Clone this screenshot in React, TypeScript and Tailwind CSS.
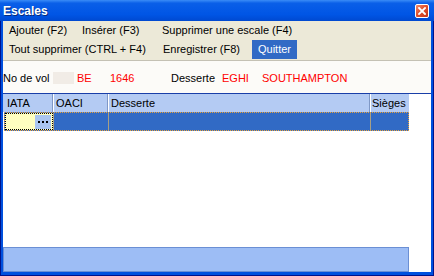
const font = "font-['Liberation_Sans','Arial',sans-serif]";

function CloseButton() {
  return (
    <div className="flex h-[14px] w-[14px] items-center justify-center rounded-[2px] border border-white bg-[linear-gradient(135deg,#F08A6C,#E2512D_45%,#C5361A)]">
      <svg width="8" height="8" viewBox="0 0 8 8">
        <path d="M1 1L7 7M7 1L1 7" stroke="white" strokeWidth="1.8" strokeLinecap="square" />
      </svg>
    </div>
  );
}

function MenuItem({ label, w, active }: { label: string; w: string; active?: boolean }) {
  return (
    <div
      className={`flex h-[19px] items-center pl-[6px] ${w} ${
        active ? "bg-[#316AC5] text-white" : "text-black"
      }`}
    >
      {label}
    </div>
  );
}

function Sep({ color }: { color: string }) {
  return <div className={`w-[1px] self-stretch ${color}`} />;
}

export default function App() {
  return (
    <div className={`${font} flex h-[276px] w-[434px] flex-col overflow-hidden bg-[#0050DE] text-[11px]`}>
      {/* title bar */}
      <div className="flex h-[21px] shrink-0 items-center justify-between bg-[linear-gradient(to_bottom,#3A8CF7,#0A5FE8_15%,#0055E5_70%,#0049D0)] pl-[3px] pr-[5px]">
        <span className="text-[12px] font-bold text-white [text-shadow:1px_1px_0_#0A2A7A]">Escales</span>
        <CloseButton />
      </div>

      <div className="flex flex-1 flex-col border-x-[1px] border-b-[1px] border-[#00138C] bg-[#0050DE] px-[2px] pb-[3px]">
        <div className="flex flex-1 flex-col bg-white">
          {/* menu */}
          <div className="flex h-[39px] shrink-0 flex-col bg-[#ECE9D8]">
            <div className="flex">
              <MenuItem label="Ajouter (F2)" w="w-[73px]" />
              <MenuItem label="Insérer (F3)" w="w-[80px]" />
              <MenuItem label="Supprimer une escale (F4)" w="w-[160px]" />
            </div>
            <div className="flex">
              <MenuItem label="Tout supprimer (CTRL + F4)" w="w-[154px]" />
              <MenuItem label="Enregistrer (F8)" w="w-[95px]" />
              <MenuItem label="Quitter" w="w-[45px]" active />
            </div>
          </div>
          <div className="h-[1px] shrink-0 bg-[#C4C1B4]" />

          {/* flight info */}
          <div className="flex h-[32px] shrink-0 items-center bg-[#FCFBF8] pt-[2px]">
            <span className="w-[50px] text-black">No de vol</span>
            <span className="h-[12px] w-[21px] bg-[#F1ECE6]" />
            <span className="ml-[3px] w-[33px] text-[#FF0000]">BE</span>
            <span className="w-[61px] text-[#FF0000]">1646</span>
            <span className="w-[51px] text-black">Desserte</span>
            <span className="w-[40px] text-[#FF0000]">EGHI</span>
            <span className="text-[#FF0000]">SOUTHAMPTON</span>
          </div>

          {/* grid */}
          <div className="flex flex-1 flex-col border-t border-[#1A3FA8] bg-white">
            <div className="flex h-[18px] w-[406px] shrink-0 bg-[#B4CBF3] text-black">
              <div className="flex w-[49px] items-center pl-[4px]">IATA</div>
              <Sep color="bg-[#7F98C6]" />
              <Sep color="bg-white" />
              <div className="flex w-[53px] items-center pl-[2px]">OACI</div>
              <Sep color="bg-[#7F98C6]" />
              <Sep color="bg-white" />
              <div className="flex w-[260px] items-center pl-[2px]">Desserte</div>
              <Sep color="bg-[#7F98C6]" />
              <Sep color="bg-white" />
              <div className="flex flex-1 items-center pl-[1px]">Sièges</div>
            </div>

            <div className="ml-[1px] flex h-[19px] w-[405px] shrink-0 border border-dotted border-[#E8A23C] bg-[#316AC5]">
              <div className="flex w-[48px] items-center justify-end border border-dotted border-black bg-[#FFFFC0] pr-[1px]">
                <div className="flex h-[14px] w-[16px] items-center justify-center gap-[2px] bg-[#A9C5F0]">
                  <span className="h-[2px] w-[2px] bg-black" />
                  <span className="h-[2px] w-[2px] bg-black" />
                  <span className="h-[2px] w-[2px] bg-black" />
                </div>
              </div>
              <div className="w-[1px] bg-[#A89F84]" />
              <div className="w-[54px]" />
              <div className="w-[1px] bg-[#A89F84]" />
              <div className="w-[261px]" />
              <div className="w-[1px] bg-[#A89F84]" />
              <div className="flex-1" />
            </div>

            <div className="flex-1" />

            <div className="h-[25px] w-[406px] shrink-0 border border-[#6B8FD4] bg-[#9DBDF5]" />
          </div>
        </div>
      </div>
    </div>
  );
}
